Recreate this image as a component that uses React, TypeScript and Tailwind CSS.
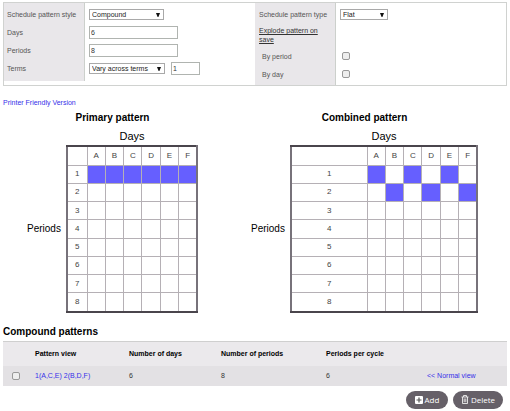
import React, { useState } from 'react';

const days = ['A', 'B', 'C', 'D', 'E', 'F'];
const periods = [1, 2, 3, 4, 5, 6, 7, 8];

const primaryCells = ['1A', '1B', '1C', '1D', '1E', '1F'];
const combinedCells = ['1A', '1C', '1E', '2B', '2D', '2F'];

const inputStyle = 'border border-[#b0b4b0] bg-white h-[13px] px-px text-[#333]';
const checkStyle = 'appearance-none block w-2 h-2 border border-[#999] rounded-[2px] bg-[#eee] checked:bg-[#6560ff]';

type SelectProps = {
    id: string;
    width: string;
    options: string[];
};

const Select: React.FC<SelectProps> = ({ id, width, options }) => {
    return (
        <span className={`relative block ${width}`}>
            <select
                id={id}
                className="appearance-none block w-full h-[11px] pl-[2px] leading-[9px] border border-[#a9a9a9] bg-white text-[#222]"
            >
                {options.map((option) => (
                    <option key={option}>{option}</option>
                ))}
            </select>
            <svg className="absolute right-1 top-1 w-1 h-1 pointer-events-none" viewBox="0 0 4 4">
                <path d="M0 0h4L2.4 4h-.8z" fill="#111" />
            </svg>
        </span>
    );
};

type PatternProps = {
    title: string;
    filled: string[];
    wide?: boolean;
};

const Pattern: React.FC<PatternProps> = ({ title, filled, wide }) => {
    const cell = 'border border-[#b5b0b5] p-0 font-normal text-center';

    return (
        <section>
            <h2 className="text-center text-[10px] leading-3 font-bold">{title}</h2>
            <div className="grid grid-cols-[auto_auto] items-center gap-x-[3px] mt-1">
                <div className="col-start-2 text-center text-[11px] leading-4">Days</div>
                <div className="row-start-2 w-9 text-[10px] leading-4">Periods</div>
                <table
                    className={`table-fixed border-collapse border-2 border-x-[#77727a] border-y-[#4a454c] text-[8px] leading-[10px] text-[#444] h-[168px] mt-px ${wide ? 'w-[188px]' : 'w-[132px]'}`}
                >
                    <thead>
                        <tr className="h-[19px]">
                            <th className={`${cell} ${wide ? 'w-[76px]' : 'w-5'}`}></th>
                            {days.map((day) => (
                                <th key={day} className={cell}>{day}</th>
                            ))}
                        </tr>
                    </thead>
                    <tbody>
                        {periods.map((period) => (
                            <tr key={period}>
                                <th className={cell}>{period}</th>
                                {days.map((day) => (
                                    <td
                                        key={day}
                                        className={`${cell} ${filled.includes(`${period}${day}`) ? 'bg-[#665fff]' : 'bg-white'}`}
                                    ></td>
                                ))}
                            </tr>
                        ))}
                    </tbody>
                </table>
            </div>
        </section>
    );
};

const App: React.FC = () => {
    const [form, setForm] = useState({ days: '6', periods: '8', term: '1' });

    const handleChange = (e: React.ChangeEvent<HTMLInputElement>) => {
        setForm({ ...form, [e.target.name]: e.target.value });
    };

    const label = 'flex items-center h-[18px] pl-[3px]';
    const field = 'flex items-center h-[18px] pl-1 gap-[6px]';

    return (
        <main className="px-[3px] pt-[2px] bg-white text-black text-[7px] leading-[9px] font-['Liberation_Sans',Arial,sans-serif]">
            <form className="grid grid-cols-2 border border-[#d0d2d0] text-[#555]">
                <div className="flex pb-1">
                    <div className="w-[81px] shrink-0 pt-[2px] pb-1 bg-[#e9e7ea] border-r border-[#ccd0cc]">
                        <label htmlFor="style" className={label}>Schedule pattern style</label>
                        <label htmlFor="days" className={label}>Days</label>
                        <label htmlFor="periods" className={label}>Periods</label>
                        <label htmlFor="terms" className={label}>Terms</label>
                    </div>
                    <div className="pt-[2px]">
                        <div className={field}>
                            <Select id="style" width="w-[75px]" options={['Compound', 'Simple']} />
                        </div>
                        <div className={field}>
                            <input id="days" name="days" value={form.days} onChange={handleChange} className={`${inputStyle} w-[89px]`} />
                        </div>
                        <div className={field}>
                            <input id="periods" name="periods" value={form.periods} onChange={handleChange} className={`${inputStyle} w-[89px]`} />
                        </div>
                        <div className={field}>
                            <Select id="terms" width="w-[76px]" options={['Vary across terms', 'Same for all terms']} />
                            <input name="term" aria-label="Term" value={form.term} onChange={handleChange} className={`${inputStyle} w-[29px]`} />
                        </div>
                    </div>
                </div>
                <div className="flex">
                    <div className="w-[81px] shrink-0 pt-[2px] bg-[#e9e7ea] border-r border-[#ccd0cc]">
                        <label htmlFor="type" className="flex items-center h-[18px] pl-1">Schedule pattern type</label>
                        <div className="flex items-center h-6 pl-1 pr-3">
                            <a href="#explode" className="underline text-[#333]">Explode pattern on save</a>
                        </div>
                        <label htmlFor="byPeriod" className="flex items-center h-[18px] pl-[7px]">By period</label>
                        <label htmlFor="byDay" className="flex items-center h-[18px] pl-[7px]">By day</label>
                    </div>
                    <div className="pt-[2px]">
                        <div className={field}>
                            <Select id="type" width="w-12" options={['Flat', 'Nested']} />
                        </div>
                        <div className="h-6"></div>
                        <div className={`${field} ml-[2px]`}>
                            <input id="byPeriod" type="checkbox" className={checkStyle} />
                        </div>
                        <div className={`${field} ml-[2px]`}>
                            <input id="byDay" type="checkbox" className={checkStyle} />
                        </div>
                    </div>
                </div>
            </form>

            <a href="#print" className="block w-fit mt-3 text-[#3530e8]">Printer Friendly Version</a>

            <div className="flex gap-[53px] pl-6 mt-[5px]">
                <Pattern title="Primary pattern" filled={primaryCells} />
                <Pattern title="Combined pattern" filled={combinedCells} wide />
            </div>

            <h2 className="mt-[13px] text-[10px] leading-3 font-bold">Compound patterns</h2>
            <table className="w-full table-fixed mt-[3px] border-t border-[#cfcfcf] bg-[#ebe9ec] text-left text-[#333]">
                <thead>
                    <tr className="h-6 text-black">
                        <th className="w-8 p-0"></th>
                        <th className="w-[94px] p-0">Pattern view</th>
                        <th className="w-[92px] p-0">Number of days</th>
                        <th className="w-[105px] p-0">Number of periods</th>
                        <th className="w-[101px] p-0">Periods per cycle</th>
                        <th className="p-0"></th>
                    </tr>
                </thead>
                <tbody>
                    <tr className="h-5 bg-[#e3e1e4]">
                        <td className="p-0 pl-[9px]">
                            <input type="checkbox" aria-label="Select pattern" className={checkStyle} />
                        </td>
                        <td className="p-0"><a href="#pattern" className="text-[#3530e8]">1(A,C,E) 2(B,D,F)</a></td>
                        <td className="p-0">6</td>
                        <td className="p-0">8</td>
                        <td className="p-0">6</td>
                        <td className="p-0"><a href="#normal" className="text-[#3530e8]">&lt;&lt; Normal view</a></td>
                    </tr>
                </tbody>
            </table>

            <div className="flex justify-end gap-[5px] mt-[5px] pr-1 text-[8px] leading-[10px] text-white font-['Open_Sans',sans-serif]">
                <button type="button" className="flex items-center justify-center gap-[2px] w-[42px] h-[18px] rounded-full bg-[#666068]">
                    <svg className="w-2 h-2" viewBox="0 0 8 8">
                        <rect width="8" height="8" rx="1" fill="#fff" />
                        <path d="M4 1.5v5M1.5 4h5" stroke="#555" strokeWidth="1.2" />
                    </svg>
                    Add
                </button>
                <button type="button" className="flex items-center justify-center gap-[2px] w-[50px] h-[18px] rounded-full bg-[#666068]">
                    <svg className="w-2 h-[9px]" viewBox="0 0 8 9" fill="none" stroke="#eee">
                        <path d="M.5 2h7M2.5 2V.5h3V2M1.5 2v6.5h5V2M3.2 3.5v3.7M4.8 3.5v3.7" strokeWidth=".9" />
                    </svg>
                    Delete
                </button>
            </div>
        </main>
    );
};

export default App;
